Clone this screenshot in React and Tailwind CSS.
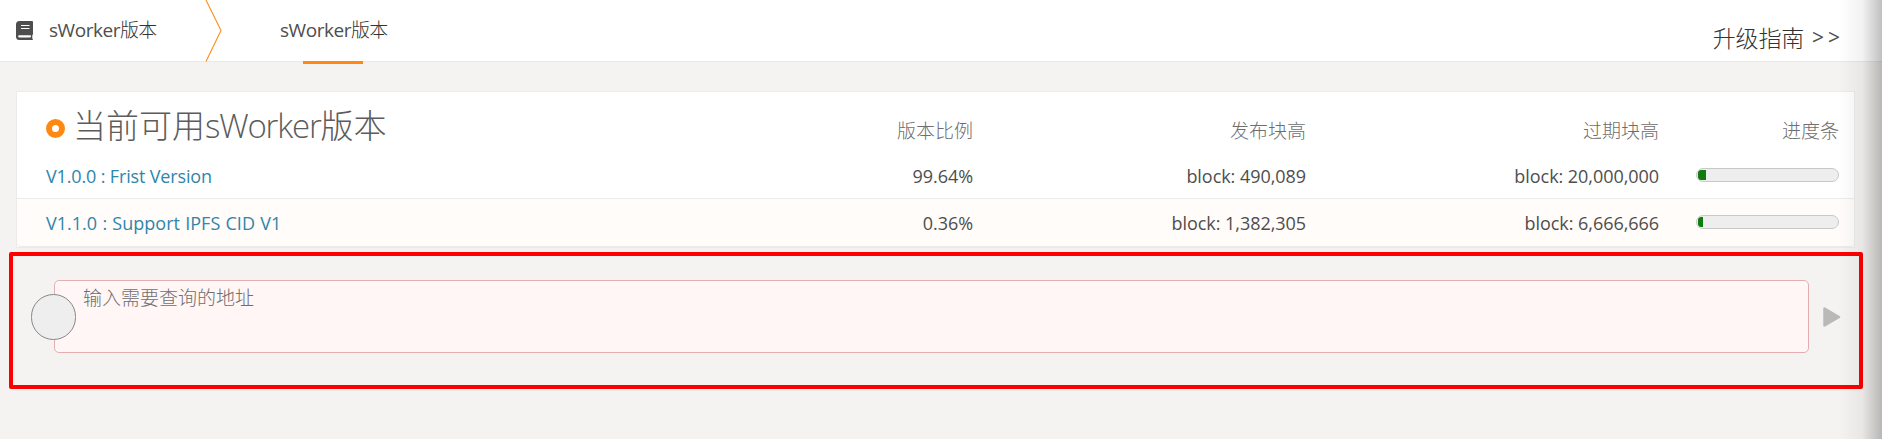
import React from "react";

const columns = "grid grid-cols-[956px_333px_353px_180px_15px]";

const rows = [
  { name: "V1.0.0 : Frist Version", nameGap: "tracking-[-0.15px]", share: "99.64%", start: "block: 490,089", end: "block: 20,000,000", fill: 8, shade: "bg-white border-b h-[46px]" },
  { name: "V1.1.0 : Support IPFS CID V1", nameGap: "tracking-[0.02px] [word-spacing:0.5px]", share: "0.36%", start: "block: 1,382,305", end: "block: 6,666,666", fill: 5, shade: "bg-[#fffcf9] border-b h-[48px] rounded-b" },
];

function TabLabel() {
  return (
    <span className="text-[19px] tracking-[-0.45px]">
      sWorker<span className="font-light tracking-[-0.7px] text-[#333]">版本</span>
    </span>
  );
}

function Tabs() {
  return (
    <header className="flex h-[62px] border-b border-[#e8e8e8] bg-white">
      <div className="flex w-[205px] items-center pl-4">
        <svg width="17" height="19" viewBox="0 0 17 19" className="shrink-0">
          <path d="M3.5 0H16Q17 0 17 1V13Q17 13.8 16.3 14V17.6Q17 18 17 18.3Q17 19 16 19H3.5Q0 19 0 15.5V3.5Q0 0 3.5 0Z" fill="#4e4e4e" />
          <path d="M5 4.5H13.5M5 7.5H13.5" stroke="white" strokeWidth="1.2" />
          <path d="M3.2 15.3H14" stroke="white" strokeWidth="2.2" strokeLinecap="round" />
        </svg>
        <span className="ml-[16px]"><TabLabel /></span>
      </div>
      <svg width="17" height="62" viewBox="0 0 17 62" className="shrink-0">
        <path d="M1 0L16 30.5L1 61.5" fill="none" stroke="#ff8c1a" strokeWidth="1.1" />
      </svg>
      <div className="relative ml-[58px] flex items-center">
        <TabLabel />
        <span className="absolute left-[23px] top-[61px] h-[3px] w-[60px] bg-[#ff8812]" />
      </div>
      <div className="ml-auto flex items-center pr-[42px] pt-[15px] text-[23px]">
        <span className="font-light tracking-[-0.2px] text-[#333]">升级指南</span>
        <span className="ml-[8px] text-[21px] [word-spacing:-1.5px]">&gt; &gt;</span>
      </div>
    </header>
  );
}

function Progress({ fill }) {
  return (
    <div className="h-[14px] w-[143px] overflow-hidden rounded-full border border-[#c8c8c8] bg-[#eee] p-px">
      <div className="h-full rounded-l-[3px] bg-[#107c10]" style={{ width: fill }} />
    </div>
  );
}

function Versions() {
  return (
    <section className="ml-[16px] mt-[29px] w-[1839px] border border-[#ebebeb] bg-white">
      <div className={`${columns} h-[61px] text-right text-[19px] font-light text-[#6e6e6e]`}>
        <div className="flex items-center justify-between">
          <h1 className="flex items-center pl-[29px] pt-[6px] text-[33px] font-light text-[#5c5c5c]">
            <span className="mr-[8px] mt-[6px] flex size-[19px] rounded-full border-[6.5px] border-[#ff8812]" />
            <span>当前可用<span className="tracking-[-1.2px]">sWorker</span>版本</span>
          </h1>
          <span className="pt-[17px]">版本比例</span>
        </div>
        <span className="flex items-center justify-end pt-[17px]">发布块高</span>
        <span className="flex items-center justify-end pt-[17px]">过期块高</span>
        <span className="flex items-center justify-end pt-[17px]">进度条</span>
      </div>
      {rows.map((r) => (
        <div key={r.name} className={`${columns} items-center border-[#ebebeb] text-[18px] ${r.shade}`}>
          <div className="flex justify-between pl-[29px] pt-[2px]">
            <span className={`text-[#2e86ab] ${r.nameGap}`}>{r.name}</span>
            <span className="tracking-[-0.05px]">{r.share}</span>
          </div>
          <span className="pt-[2px] text-right tracking-[-0.05px]">{r.start}</span>
          <span className="pt-[2px] text-right tracking-[-0.05px]">{r.end}</span>
          <div className="flex justify-end pb-px"><Progress fill={r.fill} /></div>
        </div>
      ))}
    </section>
  );
}

function AddressQuery() {
  return (
    <section className="ml-[8.5px] mt-[4px] flex h-[137px] w-[1854px] items-start rounded-[2px] border-4 border-[#ff0000] pl-[41.5px] pt-[24px]">
      <div className="relative h-[73px] w-[1755px] rounded-[5px] border border-[#e3aeb0] bg-[#fff6f5] pl-[28px] pt-[4px] text-[19px] font-light leading-[26px] text-[#6e6e6e]">
        输入需要查询的地址
        <span className="absolute left-[-24px] top-[13px] h-[46px] w-[45px] rounded-full border border-[#888] bg-[#eee]" />
      </div>
      <svg width="18" height="20" viewBox="0 0 18 20" className="ml-[14px] mt-[27px]">
        <path d="M1.5 1.5V18.5L16 10Z" fill="#bab9b8" stroke="#bab9b8" strokeWidth="2.5" strokeLinejoin="round" />
      </svg>
    </section>
  );
}

export default function App() {
  return (
    <main className="relative h-[439px] w-[1882px] overflow-hidden bg-[#f4f3f1] font-['Open_Sans','Noto_Sans_CJK_SC',sans-serif] text-[#4e4e4e]">
      <Tabs />
      <Versions />
      <AddressQuery />
      <div className="pointer-events-none absolute right-0 top-0 h-full w-[44px] bg-linear-to-r from-black/0 via-black/5 via-55% to-black/25" />
    </main>
  );
}
